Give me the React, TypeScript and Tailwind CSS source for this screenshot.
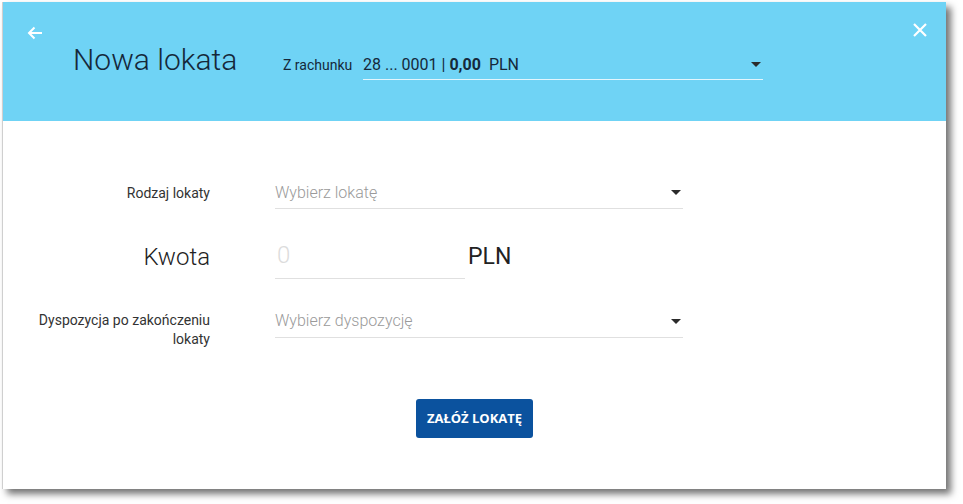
import React from 'react';

const Caret: React.FC<{ className?: string }> = ({ className }) => (
  <svg width="10" height="5" viewBox="0 0 10 5" className={className}>
    <polygon points="0,0 10,0 5,5" fill="#2b2b2b" />
  </svg>
);

export default function App() {
  return (
    <div className="w-[963px] h-[504px] bg-white pt-[2px] pl-[2px] font-['Roboto',sans-serif]">
      <div className="w-[944px] h-[487px] bg-white border-l border-[#cfcfcf] flex flex-col shadow-[5px_5px_7px_rgba(0,0,0,0.55)]">
        {/* header */}
        <div className="h-[119px] bg-[#6fd3f5] pt-[20px] pl-[24px] pr-[19px] flex flex-col">
          <div className="h-[20px] flex justify-between items-start">
            <svg width="16" height="14" viewBox="0 0 16 14" className="mt-[4px]">
              <path d="M15 7H2M7.5 1.5 2 7l5.5 5.5" stroke="#fff" strokeWidth="2" fill="none" />
            </svg>
            <svg width="14" height="14" viewBox="0 0 14 14" className="mt-[1px]">
              <path d="M1 1l12 12M13 1 1 13" stroke="#fff" strokeWidth="2.2" fill="none" />
            </svg>
          </div>
          <div className="flex items-baseline mt-[3px] pl-[46px]">
            <h1 className="w-[210px] text-[30px] leading-[30px] font-light text-[#15283a]">Nowa lokata</h1>
            <span className="w-[80px] text-[14px] font-normal text-[#15283a]">Z rachunku</span>
            <div className="w-[400px] flex items-center justify-between pb-[4px] border-b border-[#e3f6fd] pr-[2px]">
              <span className="text-[16px] leading-[20px] text-[#15283a]">
                28 ... 0001 | <b className="font-bold">0,00</b>
                <span className="ml-[8px]">PLN</span>
              </span>
              <Caret className="mb-[2px]" />
            </div>
          </div>
        </div>

        {/* form */}
        <div className="flex flex-col pt-[56px]">
          <div className="flex items-center">
            <label className="w-[207px] text-right text-[14px] leading-[20px] text-[#333]">Rodzaj lokaty</label>
            <div className="ml-[65px] w-[408px] h-[32px] border-b border-[#e0e0e0] flex items-center justify-between pr-[2px]">
              <span className="text-[16px] font-light text-[#9a9a9a]">Wybierz lokatę</span>
              <Caret />
            </div>
          </div>

          <div className="flex items-start mt-[29px]">
            <label className="w-[207px] text-right text-[24px] leading-[30px] pt-[4px] font-light text-[#222]">Kwota</label>
            <div className="ml-[65px] w-[190px] h-[41px] pt-[2px] border-b border-[#e0e0e0]">
              <span className="block text-[24px] leading-[30px] font-light text-[#dcdcdc] pl-[2px]">0</span>
            </div>
            <span className="ml-[3px] pt-[4px] text-[23px] leading-[30px] text-[#222]">PLN</span>
          </div>

          <div className="flex items-start mt-[26px]">
            <label className="w-[207px] text-right text-[14px] leading-[19px] pt-[6px] text-[#333]">
              Dyspozycja po zakończeniu
              <br />
              lokaty
            </label>
            <div className="ml-[65px] w-[408px] h-[33px] border-b border-[#e0e0e0] flex items-center justify-between pr-[2px]">
              <span className="text-[16px] leading-[32px] font-light text-[#9a9a9a]">Wybierz dyspozycję</span>
              <Caret />
            </div>
          </div>

          <button className="self-center mt-[50px] w-[117px] h-[39px] rounded-[3px] bg-[#0b529e] text-white text-[13px] font-bold font-['Open_Sans',sans-serif] uppercase">
            Załóż lokatę
          </button>
        </div>
      </div>
    </div>
  );
}
